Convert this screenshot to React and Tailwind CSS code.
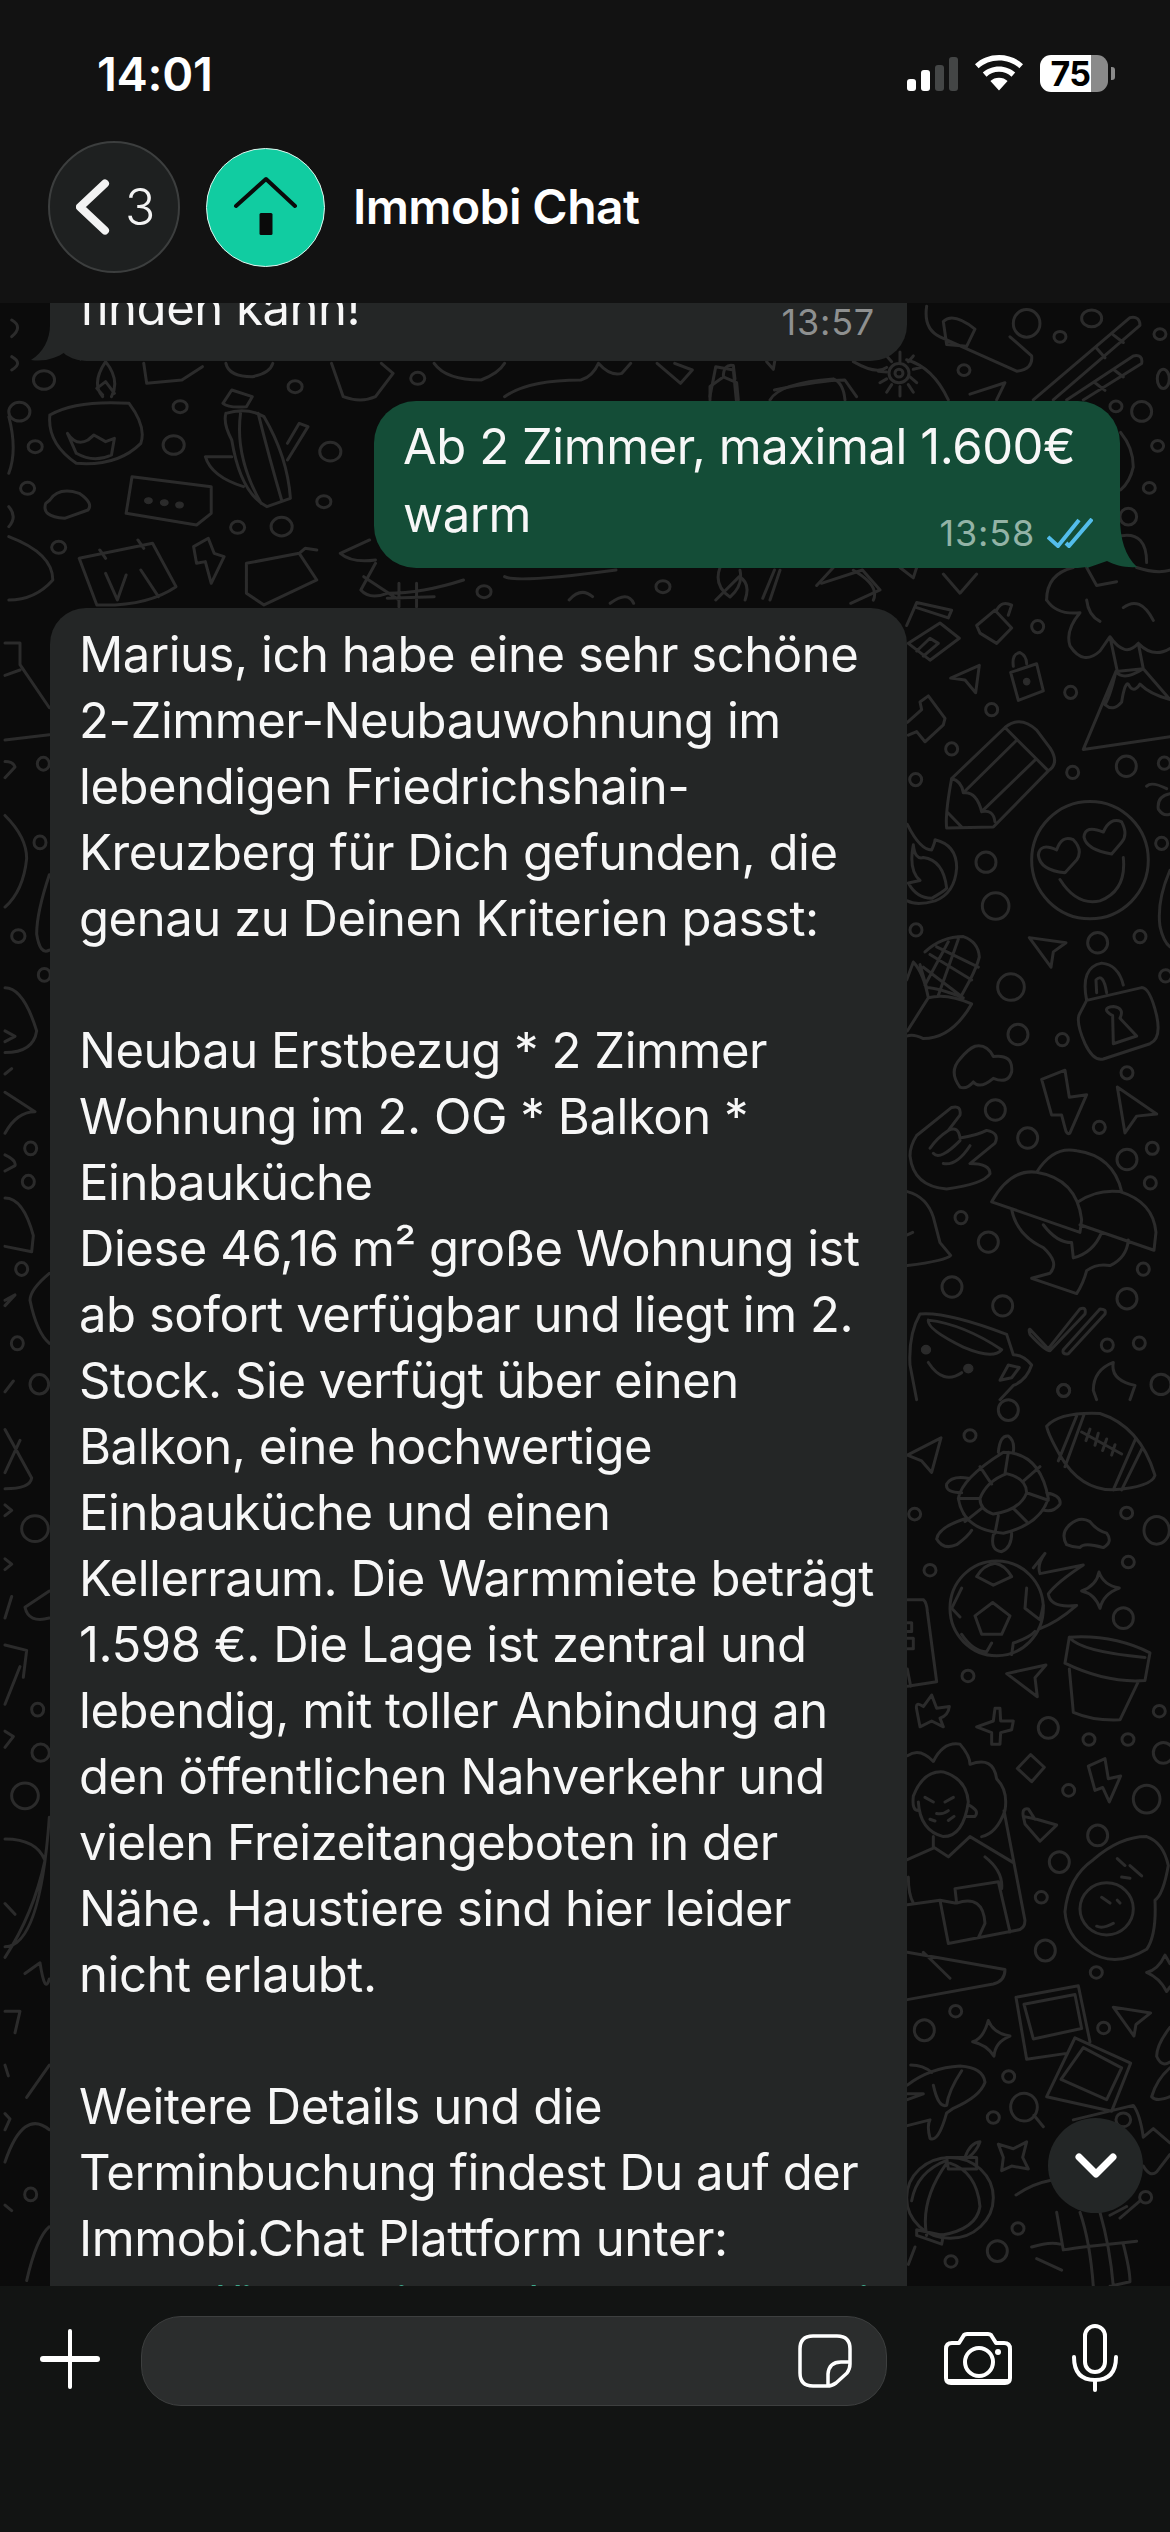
const FONT = "font-['Inter','Liberation_Sans',sans-serif]";

const small = (list, rx, ry) => list.map(([x, y]) => [x, y, rx, ry]);

const Doodle = ({ t, d, e = [], dots = [] }) => (
  <g transform={t}>
    <path d={d} vectorEffect="non-scaling-stroke" strokeLinecap="round" strokeLinejoin="round" />
    {e.map(([cx, cy, rx, ry], i) => (
      <ellipse key={i} cx={cx} cy={cy} rx={rx} ry={ry} vectorEffect="non-scaling-stroke" />
    ))}
    {dots.map(([cx, cy, rx, ry], i) => (
      <ellipse key={i} cx={cx} cy={cy} rx={rx} ry={ry} className="fill-[#2b2b2b]" />
    ))}
  </g>
);

const Z4 = "M80 50 L110 5 L215 20 L205 35 L110 15 M85 85 L180 45 L238 75 L150 118 L85 85 M110 100 L150 75 L175 85 L130 110 M290 50 L345 20 L395 55 L350 85 L300 65 Z M350 20 Q365 0 395 10 L385 30 M212 153 L298 128 L287 182 L255 157 Z M392 142 L470 125 L490 178 L415 197 Z M400 130 Q395 105 420 103 Q440 110 440 125 M82 240 L125 215 L120 200 L145 188 L195 232 L190 245 L135 278 L110 258 L85 265 M610 293 L708 140 L790 135 L870 195 M708 140 Q730 160 790 135 M870 268 L610 293 M690 72 L712 140 M775 85 L790 135 M690 72 Q735 115 775 85 M708 140 Q690 190 675 205 Q700 220 725 200 Q735 160 745 165 Q760 185 780 165 Q810 185 870 195 M500 0 Q530 30 600 25 Q555 60 570 90 Q610 130 660 100 L690 72 M775 85 Q820 115 870 95 M620 0 Q625 30 660 42 M730 15 Q780 -10 820 40 M215 350 L375 250 Q420 225 470 255 L510 290 Q540 320 505 335 L340 445 L200 447 Q195 420 215 350 M375 250 L505 335 M410 275 L250 378 M468 312 L305 415 M215 350 Q245 355 250 378 Q290 375 305 415 Q340 410 345 435 M205 418 L245 445 M555 535 Q480 530 475 500 Q480 475 530 490 Q545 460 580 470 Q610 490 590 510 Z M695 498 Q620 490 612 465 Q615 440 670 455 Q690 425 725 435 Q745 460 725 475 Z M540 548 Q590 600 660 590 Q740 570 730 505 M82 440 Q120 490 155 490 Q165 475 165 470 Q230 480 230 525 Q225 575 165 590 Q110 600 82 590 M100 480 Q85 530 120 550 L85 555 Q110 585 155 585 Q195 570 200 565 Q190 510 130 505 Q105 510 100 480 M100 710 Q130 730 145 780 Q200 770 275 792 Q215 860 130 860 Q100 850 80 855 M100 710 L80 745 M145 780 L82 845 M120 715 L140 760 Q170 760 250 780 M135 690 Q185 660 250 660 Q295 670 298 700 Q290 720 270 745 L245 775 M130 720 L240 775 M150 695 L275 745 M170 680 L295 720 M205 670 L135 755 M235 665 L175 775 M448 662 L558 672 L520 690 L513 720 Z M620 785 L785 760 Q810 760 830 815 Q845 860 810 870 L670 900 Q640 905 615 870 Q585 825 600 810 Z M620 785 Q600 720 665 712 Q715 715 730 755 M650 770 L648 745 Q670 730 680 770 M700 870 L698 815 Q660 800 700 797 Q735 800 720 820 L770 855 Z M240 955 Q205 925 240 900 Q265 880 285 875 Q320 870 340 895 Q400 890 395 925 Q385 950 340 938 Q300 960 280 945 Q260 960 240 955 M485 940 L555 922 L568 975 L620 970 L570 1045 Q560 1050 555 1035 L545 1010 L515 1010 Z M712 955 L830 1008 L770 1012 L735 1045 Z M110 1050 L215 995 Q245 990 240 1010 L205 1040 Q235 1030 240 1055 Q290 1050 320 1040 Q360 1045 345 1065 L270 1105 Q330 1105 330 1125 Q310 1145 200 1155 Q100 1150 90 1090 Q90 1070 110 1050 M150 1075 Q170 1055 205 1040 M160 1085 Q180 1100 240 1060 M190 1105 Q230 1110 270 1070 M335 1180 Q390 1115 470 1122 Q590 1135 605 1215 L600 1240 Z M470 1122 Q520 1070 590 1080 Q700 1090 725 1160 M595 1180 Q650 1155 720 1160 Q820 1180 828 1240 L822 1275 L600 1225 M395 1195 Q410 1245 490 1270 Q540 1300 510 1320 L455 1330 L590 1360 Q610 1340 620 1315 Q650 1300 690 1305 Q740 1290 745 1255 M490 1225 Q530 1260 575 1260 L580 1290 Q640 1280 665 1240 M82 1160 Q140 1170 160 1210 L180 1260 L212 1285 Q200 1295 82 1305 M82 1245 L98 1240 M120 1400 Q200 1395 380 1440 L400 1480 Q430 1480 455 1500 Q440 1530 400 1540 L360 1568 M120 1400 Q85 1440 90 1500 L110 1568 M145 1412 Q250 1420 365 1470 Q340 1490 250 1465 Q140 1430 145 1412 M145 1495 Q190 1540 245 1515 M360 1530 L385 1500 L418 1505 L395 1525 Z M450 1430 L505 1468 L600 1390 Q620 1385 615 1400 L510 1472 Q500 1475 450 1440 Q445 1430 450 1430 M550 1470 L660 1390 Q680 1390 675 1400 L565 1478 Q545 1480 550 1470 M700 1495 Q640 1510 640 1550 L650 1568 M700 1495 Q690 1530 765 1540 L750 1568 M870 530 Q830 590 840 640 Q850 670 870 680 M860 370 Q815 355 800 365 M870 380 Q830 385 835 410 Q850 425 870 420";
const Z4E = [
  ...small([[473,52],[572,181],[335,215],[215,292],[107,352],[578,338],[853,320],[845,477],[108,647],[780,660],[857,737],[547,862],[741,927],[658,1034],[817,1075],[811,1143],[243,1211],[790,1312],[682,1461],[778,1457],[551,1550]], 18, 12),
  ...small([[739,326],[318,514],[653,672],[414,852],[346,1000],[443,1055],[741,1097],[325,1259],[216,1347],[368,1384],[741,1370],[843,1538]], 30, 20),
  ...small([[347,600],[393,759]], 40, 26),
  [630,510,175,115],
];
const Z5 = "M500 80 Q540 55 660 58 Q780 80 825 165 Q815 185 700 190 Q600 190 540 130 Q505 95 500 80 M535 140 L590 62 M555 150 L612 60 M700 190 L768 100 M725 190 L785 120 M605 90 L725 128 M630 85 L618 105 M655 92 L645 113 M680 102 L668 122 M705 112 L695 130 M235 205 Q245 170 370 125 Q480 125 505 205 Q480 250 370 265 Q250 260 235 205 M300 205 Q320 175 380 162 Q440 170 440 195 Q420 225 340 232 Q300 225 300 205 M300 150 L335 180 M385 125 L375 162 M480 150 L430 175 M440 195 L505 208 M400 222 L440 245 M355 235 L345 265 M305 222 L255 245 M235 205 L300 205 M355 125 Q360 95 385 97 Q405 105 400 125 M245 195 Q195 195 200 180 Q215 165 265 170 M500 195 Q545 200 540 215 Q520 230 490 225 M255 240 Q175 255 170 275 Q190 295 230 285 Q265 270 275 260 M340 268 Q330 295 365 297 Q395 290 395 265 M285 408 L338 385 L390 408 L365 440 L305 440 Z M290 340 L340 355 L395 340 Q375 320 345 317 Q310 320 290 340 M245 360 L215 395 L240 410 M440 360 L435 395 L480 415 L490 390 M245 440 Q280 470 320 470 L335 455 M395 475 L400 455 Q450 445 465 435 M460 325 L495 300 Q470 320 480 335 L610 320 Q530 350 505 370 Q510 395 590 390 Q530 420 480 430 M605 365 Q650 355 657 332 Q670 355 718 360 Q670 370 660 395 Q645 370 605 365 M555 490 L568 445 Q700 440 810 472 L795 520 Q680 525 555 490 M568 445 Q600 470 795 480 M568 500 L580 575 Q640 590 720 588 L775 522 M560 285 Q540 265 570 250 Q600 235 630 245 Q650 260 680 265 Q700 280 670 290 Q610 280 600 290 Q580 290 560 285 M380 508 L498 493 L465 515 L472 548 Z M82 130 L183 100 L155 160 L125 140 Z M82 380 L130 380 Q140 385 142 400 L170 522 L82 530 M82 420 L95 420 L95 435 L82 435 M82 447 L100 447 L100 465 L82 465 M82 500 L92 530 M110 570 Q105 555 130 565 L155 545 L170 568 L208 565 Q205 580 180 585 L190 600 L155 590 L120 600 Z M290 600 L340 590 L345 568 L360 568 L362 590 L400 590 L395 605 L362 610 L360 630 L335 630 L335 610 Z M412 672 L452 648 L493 670 L455 695 Z M82 650 Q120 635 160 660 Q190 625 240 630 Q270 650 270 665 Q340 650 350 690 Q385 710 375 745 Q350 785 305 790 M100 720 Q130 675 190 678 Q260 690 265 730 Q250 790 190 790 Q120 780 115 730 M100 720 Q95 745 115 745 M265 735 Q300 745 285 755 L262 755 M160 790 L160 810 L82 830 M160 808 L205 825 L270 790 L400 835 M372 745 L435 935 Q435 950 410 952 L205 975 L180 900 L82 908 M225 880 L355 868 L390 955 M225 880 L230 905 Q310 890 315 940 L295 965 M180 900 L225 905 M85 860 Q85 890 100 905 M315 825 Q370 850 365 880 M82 990 L375 1020 Q375 1040 340 1045 L82 1072 M130 990 L210 1035 M135 722 L160 730 M195 730 L220 722 M170 750 Q190 752 205 745 M150 760 L165 763 M205 762 L222 755 M430 755 L470 760 L530 770 L480 798 L435 768 Z M430 755 Q425 740 445 742 L465 760 M625 668 L675 655 L685 690 L722 685 L688 730 L668 705 L645 710 Z M555 920 Q565 860 640 830 Q720 790 800 790 Q850 800 865 840 Q850 890 825 900 Q830 960 800 985 Q700 1020 620 985 Q560 960 555 920 M712 828 L735 840 M750 840 L785 858 M725 860 L750 862 M650 945 Q670 950 700 940 M665 895 L690 905 M712 900 L720 905 M800 1025 Q835 1020 855 995 L870 1010 M800 1025 Q840 1035 860 1058 L870 1050 M408 1068 L595 1048 L630 1145 M408 1068 L440 1175 L560 1165 M432 1080 L585 1063 L605 1122 L460 1140 Z M585 1138 L752 1182 L695 1265 L500 1240 Z M610 1155 L725 1190 L680 1245 L543 1210 Z M700 1085 L812 1095 L768 1115 L762 1135 Z M278 1145 Q310 1140 325 1108 Q340 1130 390 1135 Q345 1145 342 1170 Q320 1150 278 1145 M82 1220 Q150 1190 240 1187 Q310 1190 315 1215 Q300 1240 220 1260 L200 1268 Q175 1320 150 1312 Q140 1290 150 1280 L82 1290 M92 1185 Q130 1185 155 1198 M82 1235 L130 1235 L82 1245 M160 1220 Q175 1260 200 1255 Q205 1230 245 1195 M462 1272 L490 1292 M355 1322 L400 1330 L440 1318 L428 1345 L445 1365 L395 1360 L365 1368 L370 1345 Z M140 1480 Q120 1420 200 1355 M210 1355 Q290 1370 300 1430 Q290 1470 180 1480 M95 1420 Q110 1370 200 1350 M200 1345 L290 1345 L290 1365 L205 1365Z M255 1345 Q270 1320 300 1318 Q290 1335 265 1345 M110 1470 L190 1480 L185 1495 L110 1480 Z M105 1500 L85 1530 M408 1410 Q460 1390 510 1385 M530 1440 L550 1505 Q600 1500 770 1490 M600 1440 Q630 1490 640 1568 M660 1440 Q690 1500 700 1568 M740 1430 L690 1445 M720 1450 L780 1420 M455 1500 Q510 1490 540 1495 M470 1520 L545 1540 M730 1495 Q750 1540 750 1560 L690 1568 M580 1280 L760 1255 Q780 1270 790 1310 L820 1295 L870 1320 M790 1360 Q810 1380 830 1370 L870 1340 M870 1120 Q830 1150 830 1170 Q845 1190 870 1180 M870 1190 Q830 1210 815 1240 Q830 1250 870 1240";
const Z5E = [
  ...small([[270,96],[551,18],[740,230],[104,232],[150,329],[745,315],[264,512],[627,622],[744,622],[838,573],[566,710],[484,895],[649,1025],[227,1092],[671,1121],[386,1205],[340,1276],[797,1414],[414,1468],[213,1525]], 18, 10),
  ...small([[385,52],[730,412],[505,602],[850,645],[653,788],[538,834],[496,987],[133,1125],[352,1507]], 30, 18),
  [830,260,38,24],[800,725,40,24],[350,395,140,82],[680,915,80,45],[432,1258,40,24],[210,1415,130,70],[730,1280,22,12],
];
const Z6 = "M85 345 Q130 300 220 310 Q250 380 240 430 Q200 500 130 490 Q80 430 85 345 M175 290 Q155 250 180 185 Q205 240 190 290 M175 285 L165 265 L180 245 L195 280 M115 400 Q130 440 150 420 L160 405 L180 425 L195 415 L190 465 Q160 490 130 460 Z M385 340 Q420 320 450 350 Q490 470 495 595 L455 620 Q410 580 395 420 Q380 370 385 340 M410 340 Q400 470 445 610 M440 340 Q460 480 480 600 M490 430 L510 370 L525 380 L490 480 M395 470 L350 470 Q360 530 415 560 M380 310 L395 270 L430 290 L420 320 Q390 325 380 310 M225 530 L360 560 L360 640 L335 675 L215 640 Z M85 600 Q100 560 135 580 Q160 610 150 630 L110 655 Q70 650 78 610 Z M135 775 L260 730 L300 860 Q250 920 165 915 Z M170 750 L180 775 M235 720 L245 745 M180 820 L200 900 L215 825 M240 810 L270 890 M330 740 L355 715 L365 760 L382 770 L360 850 L350 785 L335 790 Z M420 790 L510 760 L540 840 L450 915 L420 880 Z M510 760 L520 745 L540 750 M245 190 L250 250 L310 240 L345 200 M385 190 Q390 230 430 230 Q460 220 465 190 M565 190 L585 290 Q615 310 640 290 L670 220 L650 190 M740 190 Q760 240 820 240 Q850 220 860 190 M860 290 Q900 240 990 240 Q1010 230 1020 190 Q1040 230 1060 220 L1075 190 M1120 190 L1160 250 L1180 210 L1150 190 M1210 290 L1220 200 L1250 210 L1255 300 M1320 270 Q1400 240 1440 240 L1460 290 M640 780 Q600 790 580 760 L630 720 M640 790 L615 870 Q630 900 660 880 Q720 880 790 840 M680 850 L680 920 M710 850 L710 920 M660 895 L740 890 M620 830 L680 900 M860 830 Q880 850 1050 810 M970 900 Q990 860 1010 890 M1040 910 Q1070 870 1080 910 M1220 900 L1260 830 Q1280 850 1270 900 M1300 895 L1320 810 M1400 850 L1470 810 L1500 870 L1450 910 M20 60 Q40 80 20 110 M20 170 Q40 190 20 210 M15 350 Q30 450 15 520 M15 620 Q30 650 15 680 M15 710 Q90 760 90 840 Q60 900 15 900";
const Z6E = [[75,240,18,28],[33,335,18,28],[60,440,12,18],[296,435,18,28],[307,320,12,18],[503,260,12,18],[712,235,12,18],[563,455,18,28],[552,605,12,18],[480,680,18,28],[405,682,12,18],[47,565,12,18],[100,742,12,18],[825,875,12,18],[1130,860,12,18]];
const Z2 = "M730 840 Q760 815 825 860 L800 905 L740 900 Z M680 800 Q670 860 720 880 L950 970 Q1000 965 995 930 L930 880 M1000 1045 L1290 830 Q1320 825 1320 850 L1060 1045 M1100 1045 L1300 930 Q1330 925 1325 950 L1150 1045 M1190 910 L1215 935 M1240 875 L1270 895 M1240 965 L1270 985 M1185 1000 L1215 1020 M460 945 Q530 980 560 960 M620 940 Q700 960 745 1045 M810 1030 L915 1000 L890 1045 M600 920 L600 945 M560 930 L575 945 M640 930 L625 945 M535 970 L560 972 M640 965 L665 960 M540 1000 L560 990 M650 1000 L630 985 M600 1010 L600 1035 M560 1025 L575 1005 M640 1025 L625 1005 M210 1045 Q240 1000 400 990 Q430 1000 435 1045 M30 1045 L30 1010 L70 985 L110 1000 L115 1045 M70 985 Q70 950 100 955 L105 990 M200 945 L220 965 L225 940 M1262 1130 Q1300 1170 1300 1220 Q1290 1260 1262 1280 M1265 1400 Q1340 1390 1340 1470 M1040 1568 Q1040 1500 1120 1483 M1160 1483 L1190 1530 L1250 1520 M1310 1483 Q1370 1500 1410 1490 M60 1483 Q40 1530 90 1560 Q130 1530 120 1490 M210 1568 L240 1490 M350 1530 L400 1483 M460 1490 Q540 1530 520 1568 M600 1483 L640 1510 L650 1483 M730 1500 L780 1550 L830 1500";
const Z2E = [[1175,832,30,22],[1080,880,18,14],[980,845,40,36],[792,967,18,14],[597,975,30,25],[597,975,12,10],[1380,873,18,14],[1390,990,18,25],[1248,1062,18,14],[1325,1075,30,26],[1373,1165,18,14],[1348,1275,18,14],[1285,1350,25,22]];
const Z8 = "M15 40 L60 40 L60 60 L148 100 M15 70 L60 65 M15 130 L148 125 M15 150 Q40 150 45 155 L15 165 M15 200 Q80 220 80 240 Q70 270 15 285 M148 255 Q110 290 110 310 Q120 330 148 325 M15 360 Q70 360 110 400 Q100 420 15 420 M15 400 L45 405 L15 410 M15 440 L35 435 M15 457 L105 475 Q50 475 15 495 M15 515 Q50 520 45 525 L15 530 M15 555 Q70 555 100 590 L95 605 L15 600 M15 650 L45 645 L15 655 M148 625 Q90 640 90 650 Q110 680 148 690 M15 735 L40 725 M15 770 L95 815 Q90 825 15 825 M15 810 L60 780 M15 840 L35 845 L15 850 M15 890 L35 895 L15 900 M15 945 L35 925 M148 920 L75 935 Q85 950 148 945 M15 970 L80 975 L70 1000 M15 1025 L60 990 M15 1050 L40 1055 L15 1065 M15 1150 Q110 1150 135 1170 Q100 1220 15 1260 M15 1210 L45 1220 M15 1250 Q120 1250 148 1130 M75 1275 L120 1265 Q135 1295 148 1280 M15 1310 L60 1310 L45 1330 M15 1360 L25 1370 M80 1390 L148 1360 M15 1405 L30 1410 L15 1420 M15 1450 Q70 1400 148 1420 M15 1490 L35 1495 M80 1560 Q110 1520 148 1510";
const Z8E = [[130,152,18,6],[120,225,18,6],[55,312,20,6],[133,348,18,6],[92,509,18,6],[85,540,18,6],[65,621,18,6],[52,690,18,6],[118,728,28,9],[105,862,40,12],[113,1030,18,6],[122,1070,26,8],[75,1110,40,12],[92,1480,18,6]];

const Wallpaper = () => (
  <svg className="absolute inset-0 w-full h-full fill-none stroke-[#2b2b2b] stroke-[3px]" viewBox="0 303 1170 1983" preserveAspectRatio="none">
    <Doodle t="translate(0,300) scale(0.5867,0.3333)" d={Z6} e={Z6E} dots={[[253,602,6,9],[280,608,6,9],[306,615,6,9]]} />
    <Doodle t="translate(700,0) scale(0.3333,0.3827)" d={Z2} e={Z2E} />
    <Doodle t="translate(0,600) scale(0.3333,1.0773)" d={Z8} e={Z8E} />
    <Doodle t="translate(880,600) scale(0.3333,0.51)" d={Z4} e={Z4E} dots={[[440,160,10,6],[138,1470,14,8],[265,1507,14,8]]} />
    <Doodle t="translate(880,1380) scale(0.3333,0.578)" d={Z5} e={Z5E} />
  </svg>
);

const StatusBar = () => (
  <div className="h-[141px] flex justify-between pl-[97px] pr-[55px]">
    <span className="mt-[47px] text-[47px] leading-[54px] font-semibold tracking-[-0.3px] text-white h-[54px]">14:01</span>
    <div className="flex items-start pt-[55px]">
      <div className="flex items-end gap-[5px] h-[36px] w-[51px]">
        <div className="w-[9px] h-[12px] rounded-[3px] bg-white" />
        <div className="w-[9px] h-[21px] rounded-[3px] bg-white" />
        <div className="w-[9px] h-[26px] rounded-[3px] bg-[#444646]" />
        <div className="w-[9px] h-[34px] rounded-[3px] bg-[#444646]" />
      </div>
      <svg className="ml-[17px]" width="48" height="36" viewBox="0 0 48 36" fill="#fff">
        <path d="M24 0C14.5 0 6.2 3.4 0 9.2l3.6 4C9 8.2 16 5.4 24 5.4s15 2.8 20.4 7.8l3.6-4C41.8 3.4 33.5 0 24 0Z" />
        <path d="M24 11.4c-6.3 0-12 2.3-16.2 6.2l3.7 4.1c3.3-3 7.7-4.9 12.5-4.9s9.2 1.9 12.5 4.9l3.7-4.1C36 13.7 30.3 11.4 24 11.4Z" />
        <path d="M24 22.8c-3.4 0-6.4 1.2-8.6 3.3L24 35.6l8.6-9.5c-2.2-2.1-5.2-3.3-8.6-3.3Z" />
      </svg>
      <div className="ml-[17px] flex items-center">
        <div className="relative w-[68px] h-[37px] rounded-[11px] bg-[linear-gradient(90deg,#ffffff_0,#ffffff_51px,#8a8a8a_51px)] flex items-center justify-center">
          <span className="text-[34px] leading-[37px] font-bold text-black -ml-[7px] tracking-[-0.5px]">75</span>
        </div>
        <div className="ml-[3px] w-[4px] h-[13px] rounded-r-[3px] bg-[#8a8a8a]" />
      </div>
    </div>
  </div>
);

const NavBar = () => (
  <div className="flex items-center h-[132px] pl-[48px]">
    <div className="w-[132px] h-[132px] rounded-full bg-[#1e2020] border-2 border-[#3c3e3e] flex items-center pl-[26px]">
      <svg width="36" height="60" viewBox="0 0 36 60" fill="none" stroke="#f3f3f3" strokeWidth="8" strokeLinecap="round" strokeLinejoin="round">
        <path d="M29 6.5 L4 30 L29 53.5" />
      </svg>
      <span className="ml-[13px] text-[50px] leading-[60px] font-light text-[#f3f3f3]">3</span>
    </div>
    <div className="ml-[26px] w-[119px] h-[119px] rounded-full bg-[#11cca1] border border-[#dff5ee] flex items-center justify-center">
      <svg width="70" height="64" viewBox="0 0 70 64" fill="none">
        <path d="M5 31 L35 4 L64 31" stroke="#0a0a0a" strokeWidth="4" strokeLinecap="round" strokeLinejoin="round" />
        <rect x="28.5" y="38" width="13" height="22" rx="1.5" fill="#0a0a0a" />
      </svg>
    </div>
    <span className="ml-[28px] text-[48px] leading-[60px] font-semibold text-white tracking-[-0.6px]">Immobi Chat</span>
  </div>
);

const Line = ({ children }) => (
  <div className="h-[66px] leading-[66px] whitespace-nowrap">{children || "\u00A0"}</div>
);

const LINES = [
  "Marius, ich habe eine sehr schöne",
  "2-Zimmer-Neubauwohnung im",
  "lebendigen Friedrichshain-",
  "Kreuzberg für Dich gefunden, die",
  "genau zu Deinen Kriterien passt:",
  "",
  "Neubau Erstbezug * 2 Zimmer",
  "Wohnung im 2. OG * Balkon *",
  "Einbauküche",
  "Diese 46,16 m² große Wohnung ist",
  "ab sofort verfügbar und liegt im 2.",
  "Stock. Sie verfügt über einen",
  "Balkon, eine hochwertige",
  "Einbauküche und einen",
  "Kellerraum. Die Warmmiete beträgt",
  "1.598 €. Die Lage ist zentral und",
  "lebendig, mit toller Anbindung an",
  "den öffentlichen Nahverkehr und",
  "vielen Freizeitangeboten in der",
  "Nähe. Haustiere sind hier leider",
  "nicht erlaubt.",
  "",
  "Weitere Details und die",
  "Terminbuchung findest Du auf der",
  "Immobi.Chat Plattform unter:",
];

const Chat = () => (
  <div className="relative flex-1 overflow-hidden bg-[#0b0b0b]">
    <Wallpaper />
    <div className="relative flex flex-col items-start text-[49px] font-normal text-[#f7f7f7] tracking-[-0.45px]">
      <div className="relative -mt-[57px] ml-[50px] w-[857px] h-[115px] rounded-[36px] bg-[#242626] px-[29px] pt-[29px] flex justify-between">
        <svg className="absolute -left-[19px] bottom-0" width="50" height="36" viewBox="0 0 50 36" fill="#242626">
          <path d="M19 0 C19 14 12 28 0 35 C14 37 26 33 34 27 L50 36 L50 0 Z" />
        </svg>
        <div className="relative"><Line>finden kann!</Line></div>
        <span className="relative self-start mt-[27px] mr-[3px] text-[36px] leading-[40px] text-[#8e9090] tracking-[0.8px]">13:57</span>
      </div>
      <div className="relative mt-[40px] ml-[374px] w-[746px] h-[167px] rounded-[42px] bg-[#144d37] px-[29px] pt-[13px]">
        <svg className="absolute -right-[17px] bottom-0" width="50" height="50" viewBox="0 0 50 50" fill="#144d37">
          <path d="M33 0 C33 20 38 38 50 49 C38 50 28 47 20 43 L0 50 L0 0 Z" />
        </svg>
        <div className="relative"><Line>Ab 2 Zimmer, maximal 1.600€</Line><div className="mt-[2px]"><Line>warm</Line></div></div>
        <div className="absolute right-[27px] top-[112px] flex items-center">
          <span className="text-[36px] leading-[40px] text-[#93b3a6] tracking-[0.8px]">13:58</span>
          <svg className="ml-[12px]" width="46" height="30" viewBox="0 0 46 30" fill="none" stroke="#53bdeb" strokeWidth="4">
            <path d="M1 19 L11 28 L32 2" />
            <path d="M19 25 L22 28 L45 1" />
          </svg>
        </div>
      </div>
      <div className="mt-[40px] ml-[50px] w-[857px] rounded-[36px] bg-[#242626] px-[29px] pt-[14px]">
        {LINES.map((l, i) => <Line key={i}>{l}</Line>)}
        <Line><span className="text-[#3fa98c]">https://immobi.chat/wohnung-berlin</span></Line>
      </div>
    </div>
    <div className="absolute left-[1048px] top-[1815px] w-[95px] h-[95px] rounded-full bg-[#232626] flex items-center justify-center">
      <svg width="44" height="28" viewBox="0 0 44 28" fill="none" stroke="#fff" strokeWidth="7" strokeLinecap="round" strokeLinejoin="round">
        <path d="M5 5 L22 22 L39 5" />
      </svg>
    </div>
  </div>
);

const Composer = () => (
  <div className="h-[246px] bg-[#121413] flex items-start pt-[30px] pl-[40px]">
    <svg className="mt-[13px]" width="60" height="60" viewBox="0 0 60 60" fill="#fff">
      <rect x="0" y="27" width="60" height="6" rx="3" />
      <rect x="28" y="0" width="4" height="60" rx="2" />
    </svg>
    <div className="ml-[41px] w-[746px] h-[90px] rounded-[40px] bg-[#2b2d2d] border border-[#3d3f3f] flex items-center justify-end pr-[34px]">
      <svg width="54" height="54" viewBox="0 0 54 54" fill="none" stroke="#fff" strokeWidth="3.5" strokeLinejoin="round">
        <path d="M15 2 H39 Q52 2 52 15 V30 Q52 35 49 39 L38 49 Q34 52 29 52 H15 Q2 52 2 39 V15 Q2 2 15 2 Z" />
        <path d="M52 28 H43 Q31 28 30 40 V52" />
      </svg>
    </div>
    <svg className="ml-[56px] mt-[16px]" width="70" height="54" viewBox="0 0 70 54" fill="none" stroke="#fff">
      <path d="M3 17 Q3 11 9 11 H16 L21 3 Q22 2 24 2 H45 Q47 2 48 3 L53 11 H61 Q67 11 67 17 V46 Q67 51 62 51 H8 Q3 51 3 46 Z" strokeWidth="4" strokeLinejoin="round" />
      <path d="M3 49 H67" strokeWidth="4" />
      <ellipse cx="36" cy="30" rx="14" ry="14" strokeWidth="4" />
      <circle cx="55" cy="20" r="3" fill="#fff" stroke="none" />
    </svg>
    <svg className="ml-[59px] mt-[8px]" width="46" height="68" viewBox="0 0 46 68" fill="none" stroke="#fff" strokeWidth="4" strokeLinecap="round">
      <rect x="13" y="2" width="20" height="46" rx="10" />
      <path d="M2 33 Q2 56 23 56 Q44 56 44 33" />
      <path d="M23 56 V66" />
    </svg>
  </div>
);

export default function App() {
  return (
    <div className={`w-[1170px] h-[2532px] flex flex-col overflow-hidden ${FONT}`}>
      <header className="relative z-10 h-[303px] shrink-0 bg-[#121212]">
        <StatusBar />
        <NavBar />
      </header>
      <Chat />
      <Composer />
    </div>
  );
}
